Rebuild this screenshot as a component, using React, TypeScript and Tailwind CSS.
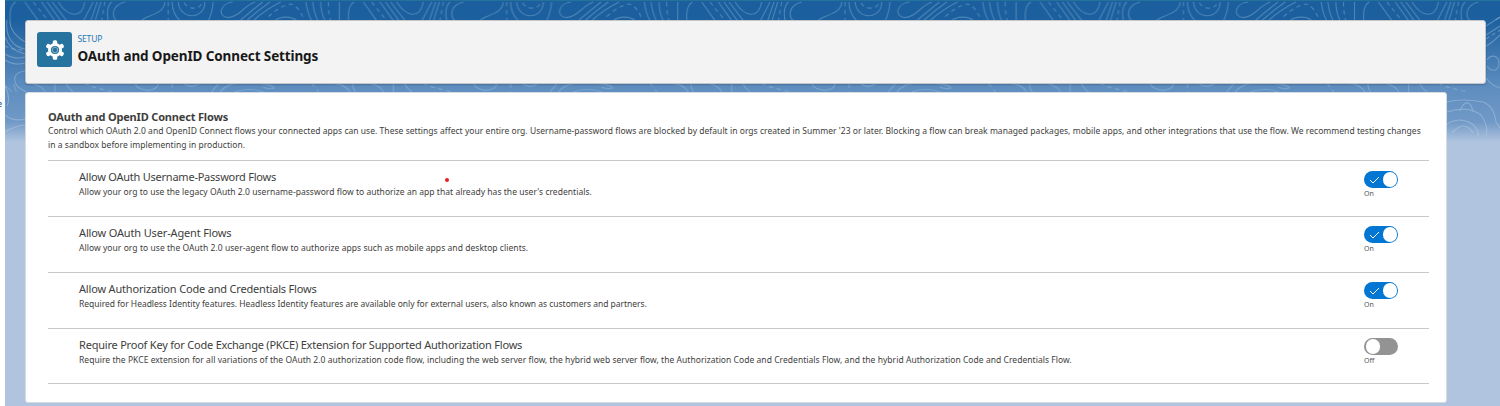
import { useState } from "react";

type Flow = { title: string; text: string; titleCls: string; textCls: string; toggleCls: string; on: boolean };

const flows: Flow[] = [
  {
    title: "Allow OAuth Username-Password Flows",
    text: "Allow your org to use the legacy OAuth 2.0 username-password flow to authorize an app that already has the user's credentials.",
    titleCls: "tracking-[-0.23px]",
    textCls: "tracking-[0.035px]",
    toggleCls: "pt-2.5",
    on: true,
  },
  {
    title: "Allow OAuth User-Agent Flows",
    text: "Allow your org to use the OAuth 2.0 user-agent flow to authorize apps such as mobile apps and desktop clients.",
    titleCls: "tracking-[-0.15px]",
    textCls: "tracking-[0.05px]",
    toggleCls: "pt-[9px]",
    on: true,
  },
  {
    title: "Allow Authorization Code and Credentials Flows",
    text: "Required for Headless Identity features. Headless Identity features are available only for external users, also known as customers and partners.",
    titleCls: "tracking-[-0.18px]",
    textCls: "tracking-[-0.02px]",
    toggleCls: "pt-[9px]",
    on: true,
  },
  {
    title: "Require Proof Key for Code Exchange (PKCE) Extension for Supported Authorization Flows",
    text: "Require the PKCE extension for all variations of the OAuth 2.0 authorization code flow, including the web server flow, the hybrid web server flow, the Authorization Code and Credentials Flow, and the hybrid Authorization Code and Credentials Flow.",
    titleCls: "tracking-[-0.21px]",
    textCls: "tracking-[0.04px]",
    toggleCls: "pt-[9px]",
    on: false,
  },
];

function Contours() {
  return (
    <svg className="absolute inset-0" width="1495" height="406" viewBox="5 0 1495 406" fill="none">
      <defs>
        <pattern id="topo" x="220" y="0" width="338.4" height="100" patternUnits="userSpaceOnUse">
          <g transform="scale(.3333)" stroke="#bcd7ee" strokeOpacity=".3" strokeWidth="3.4" fill="none">
            <path d="M38 6C0 10-10 50 25 53C60 50 70 18 105 6M128 6Q100 28 62 60M150 6Q115 30 82 60M182 6Q135 30 102 60M165 62C180 48 215 48 230 62M258 6Q262 40 275 62M278 6Q282 40 294 62M302 6Q303 40 315 62M358 6V62M386 62C383 35 388 15 402 6M430 6L470 62M480 6L520 62M497 6L537 62M512 6L555 62M530 6C560 52 600 58 610 6M635 6L606 62M647 6L628 62M658 6L641 62M680 62C675 35 680 15 690 6M730 6C690 15 690 50 705 62M850 6C848 45 790 46 780 62M872 6Q872 40 895 62M890 6C895 62 970 60 970 6M995 6Q992 40 980 62" />
            <path strokeDasharray="13 11" d="M145 50Q180 18 210 12Q235 15 252 60M325 6Q325 40 332 62M455 6L500 62M670 6L660 62M860 6V62M908 8C920 30 955 30 962 8" />
            <path d="M0 276Q20 252 50 250M45 276C70 266 105 266 130 276M115 250C140 250 160 258 162 264C150 270 140 264 130 262M340 250Q375 252 390 276M398 250Q397 265 406 276M450 250Q485 260 490 276M520 250V276M553 250Q560 265 575 276M760 250C770 278 830 278 830 250M905 250Q930 268 955 250M1012 250L990 276" />
            <path strokeDasharray="13 11" d="M275 250L296 276M610 250Q640 265 700 276M872 250V276" />
          </g>
        </pattern>
      </defs>
      <rect x="5" y="1" width="1495" height="19" fill="url(#topo)" />
      <rect x="5" y="84" width="1481" height="8" fill="url(#topo)" />
      <g stroke="#cfe0f2" strokeOpacity=".32" strokeWidth="1.1">
        <path d="M10 20Q9 32 25 42M7 20C5 37 13 47 25 49M5 37Q10 51 25 54M5 54Q15 60 25 57M5 60Q15 66 25 63M25 71C14 72 12 80 18 87L26 92M5 86Q11 98 7 106M5 115Q13 122 25 119M5 132Q14 126 25 125" />
        <path strokeDasharray="4 3" d="M5 46Q12 50 25 50" />
        <path d="M1486 26L1500 17M1486 35L1500 26M1486 46Q1491 44 1500 35M1487 60C1491 54 1499 55 1499 64C1498 72 1491 72 1487 66M1486 78Q1492 86 1500 88M1447 102Q1462 98 1483 102Q1494 106 1496 122L1500 128M1447 112Q1468 105 1481 115Q1489 127 1486 136M1447 124C1462 115 1480 124 1478 136M1460 111C1464 100 1471 100 1473 112M1452 133Q1464 119 1473 133" />
        <path strokeDasharray="4 3" d="M1486 39L1500 30" />
      </g>
    </svg>
  );
}

function Gear() {
  return (
    <svg width="20" height="20" viewBox="-10 -10 20 20">
      {[0, 60, 120].map((a) => (
        <rect key={a} x="-2.2" y="-9.7" width="4.4" height="19.4" rx="1.5" fill="#fff" transform={`rotate(${a})`} />
      ))}
      <circle r="7" fill="#fff" />
      <circle r="4.1" fill="#27739f" />
      <circle r="2.7" fill="none" stroke="#fff" strokeOpacity=".55" strokeWidth=".8" />
    </svg>
  );
}

function Toggle({ initial }: { initial: boolean }) {
  const [on, setOn] = useState(initial);
  return (
    <button className="block w-[34px] text-left" onClick={() => setOn(!on)}>
      <span className={on ? "flex h-[17px] w-[34px] items-center justify-between rounded-full bg-[#0176d3] pr-px pl-[5px]" : "flex h-[17px] w-[34px] items-center rounded-full bg-[#939393] pl-[1.5px]"}>
        {on && (
          <svg width="11" height="8" viewBox="0 0 11 8" fill="none" stroke="#fff" strokeWidth="1">
            <path d="M1 4L4 7L10 1" />
          </svg>
        )}
        <span className="size-[14.5px] rounded-full bg-white" />
      </span>
      <span className="mt-px block text-[7px] leading-[9px] text-[#555]">{on ? "On" : "Off"}</span>
    </button>
  );
}

export default function App() {
  return (
    <div className="flex h-[406px] w-[1500px] overflow-hidden bg-white font-['Noto_Sans',sans-serif] text-[#3e3e3c]">
      <div className="w-[5px] shrink-0 overflow-hidden pt-[98px]">
        <span className="-ml-[3px] block text-[9px] leading-3 text-[#174a8c]">e</span>
      </div>
      <div className="relative flex-1 bg-[#b0c4df] bg-[linear-gradient(to_bottom,#1b5f9e_0,#1b5f9e_18px,#5d8dbf_86px,#7199c6_122px,#b0c4df_142px)]">
        <Contours />
        <div className="relative h-full border-t border-[#237299] pt-[19px] pl-[19.5px]">
          <header className="flex h-16 w-[1461px] rounded-[3px] border border-[#c3c6cb] bg-[#f3f3f3] pt-[11px] pl-[11.5px] shadow-[0_1px_2px_rgba(0,0,0,0.2)]">
            <div className="flex size-[35px] items-center justify-center rounded-[3px] bg-[#27739f]">
              <Gear />
            </div>
            <div className="pl-[5.5px]">
              <p className="text-[8.5px] leading-[13px] tracking-[-0.15px] text-[#1e78b4]">SETUP</p>
              <h1 className="pt-px text-[13.5px] leading-5 font-bold tracking-[-0.12px] text-[#181818]">OAuth and OpenID Connect Settings</h1>
            </div>
          </header>
          <main className="mt-2 h-[311px] w-[1422px] rounded-[3px] border border-[#d5dbe3] bg-white pt-[17px] pl-[22.5px]">
            <h2 className="text-[11px] leading-[14px] font-bold tracking-[-0.17px]">OAuth and OpenID Connect Flows</h2>
            <div className="h-[37px] w-[1381px] border-b border-[#c9c9c9] text-[8.5px] leading-[14px] tracking-[0.034px] whitespace-nowrap">
              <p>Control which OAuth 2.0 and OpenID Connect flows your connected apps can use. These settings affect your entire org. Username-password flows are blocked by default in orgs created in Summer '23 or later. Blocking a flow can break managed packages, mobile apps, and other integrations that use the flow. We recommend testing changes</p>
              <p>in a sandbox before implementing in production.</p>
            </div>
            {flows.map((f) => (
              <section key={f.title} className="flex h-14 w-[1381px] justify-between border-b border-[#c9c9c9] px-[31px] whitespace-nowrap last:h-[55px]">
                <div className="pt-2">
                  <h3 className={`text-[11px] leading-4 ${f.titleCls}`}>{f.title}</h3>
                  <p className={`pt-px text-[8.5px] leading-3 ${f.textCls}`}>{f.text}</p>
                </div>
                <div className={f.toggleCls}>
                  <Toggle initial={f.on} />
                </div>
              </section>
            ))}
          </main>
        </div>
        <span className="absolute top-[178px] left-[440px] size-1 rounded-full bg-[#ed1c24]" />
      </div>
    </div>
  );
}
